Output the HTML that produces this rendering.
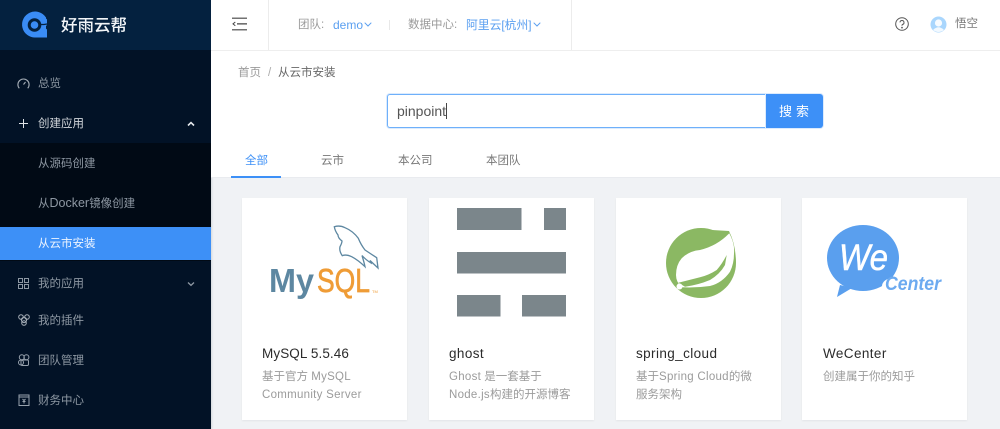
<!DOCTYPE html>
<html><head><meta charset="utf-8">
<style>
html,body{margin:0;padding:0;width:1000px;height:429px;overflow:hidden;background:#f0f2f5}
body{font-family:"Liberation Sans","Noto Sans CJK SC",sans-serif;position:relative}
#w{position:absolute;left:0;top:0;width:1000px;height:429px;overflow:hidden;filter:blur(.3px);background:#f0f2f5}
.a{position:absolute;white-space:nowrap;line-height:1}
.box{position:absolute}
.nav{color:#8e98a3;font-size:11.5px}
.card{position:absolute;top:198px;width:165px;height:222px;background:#fff;box-shadow:0 1px 2px rgba(0,0,0,.06)}
.t{position:absolute;left:20px;top:149px;font-size:13.5px;color:#2b2b2b;line-height:1;white-space:nowrap;letter-spacing:.4px}
.d{position:absolute;left:20px;top:170px;font-size:11.5px;color:#9b9b9b;line-height:18px;white-space:nowrap}
.d span{letter-spacing:.28px}
svg{position:absolute;overflow:visible}
</style></head><body><div id="w">
<!-- sidebar -->
<div class="box" style="left:0;top:0;width:211px;height:429px;background:#021226;box-shadow:1px 0 2px rgba(0,21,41,.12)"></div>
<div class="box" style="left:0;top:0;width:211px;height:50px;background:#04213f"></div>
<div class="box" style="left:0;top:143px;width:211px;height:118px;background:#010a15"></div>
<div class="box" style="left:0;top:227px;width:211px;height:33px;background:#3d90f7"></div>
<svg style="left:20px;top:10px" width="30" height="30" viewBox="0 0 30 30">
<path d="M26 7.5A13 13 0 1 0 16 27.5H27V19.5L22.5 15.500H27V11L22 11Q19.500 7 15 7.500A7.500 7.500 0 0 0 15 22.500Q19 22.500 21 19.500L26 25" fill="#3a8cf5"/>
<circle cx="14.500" cy="15" r="6.800" fill="#04213f"/><circle cx="14.500" cy="15" r="3.800" fill="#3a8cf5"/>
<path d="M21 12.500H27V9.500L25 7.500L19 8Z" fill="#3a8cf5"/><path d="M20 14.500H24L27 14" stroke="#04213f" stroke-width="1.200" fill="none"/>
</svg>
<div class="a" style="left:61px;top:18px;font-size:16.5px;color:#f2f5f8;font-weight:500">好雨云帮</div>

<svg style="left:17px;top:77px" width="13" height="13" viewBox="0 0 13 13" fill="none" stroke="#a6aeb7" stroke-width="1.100"><path d="M2.300 11.300A5.600 5.600 0 1 1 10.700 11.300"/><path d="M6.500 7.500L8.500 5"/></svg>
<div class="a nav" style="left:38px;top:79px">总览</div>
<svg style="left:18px;top:118px" width="11" height="11" viewBox="0 0 11 11" stroke="#dfe3e7" stroke-width="1"><path d="M5.500 1V10M1 5.500H10"/></svg>
<div class="a nav" style="left:38px;top:119px;color:#d3d7dc">创建应用</div>
<svg style="left:187px;top:121px" width="8" height="6" viewBox="0 0 8 6" fill="none" stroke="#e6e9ec" stroke-width="1.600"><path d="M1 4.500L4 1.600L7 4.500"/></svg>
<div class="a nav" style="left:38px;top:159px">从源码创建</div>
<div class="a nav" style="left:38px;top:197px">从<span style="font-size:12.5px">Docker</span>镜像创建</div>
<div class="a nav" style="left:38px;top:239px;color:#eef5ff">从云市安装</div>
<svg style="left:18px;top:278px" width="11" height="11" viewBox="0 0 11 11" fill="none" stroke="#8e98a3" stroke-width="1"><rect x=".5" y=".5" width="4" height="4"/><rect x="6.500" y=".5" width="4" height="4"/><rect x=".5" y="6.500" width="4" height="4"/><rect x="6.500" y="6.500" width="4" height="4"/></svg>
<div class="a nav" style="left:38px;top:279px">我的应用</div>
<svg style="left:187px;top:281px" width="8" height="6" viewBox="0 0 8 6" fill="none" stroke="#8e98a3" stroke-width="1.300"><path d="M1 1.500L4 4.400L7 1.500"/></svg>
<svg style="left:18px;top:314px" width="12" height="12" viewBox="0 0 12 12" fill="none" stroke="#a6aeb7" stroke-width="1"><circle cx="3" cy="3" r="2.300"/><circle cx="9" cy="3" r="2.300"/><circle cx="6" cy="6" r="2.600"/><circle cx="6" cy="9" r="2.300"/></svg>
<div class="a nav" style="left:38px;top:316px">我的插件</div>
<svg style="left:18px;top:354px" width="12" height="12" viewBox="0 0 12 12" fill="none" stroke="#98a2ad" stroke-width="1"><circle cx="3.800" cy="3.200" r="2.500"/><circle cx="8.400" cy="3.200" r="2.500"/><circle cx="3" cy="8.500" r="2.500"/><rect x="3" y="6" width="7.500" height="5.500" rx="1.200"/></svg>
<div class="a nav" style="left:38px;top:356px">团队管理</div>
<svg style="left:18px;top:394px" width="12" height="12" viewBox="0 0 12 12" fill="none" stroke="#98a2ad" stroke-width="1"><path d="M1 1H11V11.500H1ZM1 3H11"/><path d="M4.500 5L6 6.500L7.500 5M6 6.500V9.500M4.500 7.500H7.500"/></svg>
<div class="a nav" style="left:38px;top:396px">财务中心</div>

<!-- header -->
<div class="box" style="left:211px;top:0;width:789px;height:177px;background:#fff"></div>
<div class="box" style="left:211px;top:50px;width:789px;height:1px;background:#eeeeee"></div>
<div class="box" style="left:268px;top:0;width:1px;height:50px;background:#ececec"></div>
<div class="box" style="left:571px;top:0;width:1px;height:50px;background:#ececec"></div>
<svg style="left:232px;top:17px" width="15" height="14" viewBox="0 0 15 14" fill="none" stroke="#444" stroke-width="1.200"><path d="M0 1.200H15M5 6.900H15M0 12.800H15"/><path d="M3.300 5L1 6.900L3.300 8.800" stroke-width="1"/></svg>
<div class="a" style="left:298px;top:20px;font-size:11.5px;color:#9a9a9a">团队:</div>
<div class="a" style="left:333px;top:19px;font-size:12px;color:#5a9ff0">demo</div>
<svg style="left:364px;top:22px" width="8" height="5" viewBox="0 0 8 5" fill="none" stroke="#5a9ff0" stroke-width="1"><path d="M.7 .7L4 4L7.300 .7"/></svg>
<div class="box" style="left:389px;top:20px;width:1px;height:10px;background:#e8e8e8"></div>
<div class="a" style="left:408px;top:20px;font-size:11.5px;color:#9a9a9a">数据中心:</div>
<div class="a" style="left:466px;top:20px;font-size:11.8px;color:#5a9ff0">阿里云[杭州]</div>
<svg style="left:533px;top:22px" width="8" height="5" viewBox="0 0 8 5" fill="none" stroke="#5a9ff0" stroke-width="1"><path d="M.7 .7L4 4L7.300 .7"/></svg>
<svg style="left:895px;top:17px" width="14" height="14" viewBox="0 0 14 14" fill="none" stroke="#555" stroke-width="1"><circle cx="7" cy="7" r="6.300"/><path d="M5 5.400A2 2 0 1 1 7.300 7.500Q7 7.700 7 8.800"/><circle cx="7" cy="10.600" r=".4"/></svg>
<svg style="left:930px;top:16px" width="17" height="17" viewBox="0 0 17 17"><circle cx="8.500" cy="8.500" r="8" fill="#a9d6fd"/><circle cx="8.500" cy="7" r="3.600" fill="#fff" opacity=".9"/><path d="M3 14Q8.500 8.500 14 14Q8.500 18 3 14Z" fill="#fff" opacity=".85"/></svg>
<div class="a" style="left:955px;top:19px;font-size:11.5px;color:#777">悟空</div>

<!-- breadcrumb -->
<div class="a" style="left:238px;top:68px;font-size:11.5px;color:#9a9a9a">首页</div>
<div class="a" style="left:268px;top:68px;font-size:11.5px;color:#aaa">/</div>
<div class="a" style="left:278px;top:68px;font-size:11.5px;color:#666">从云市安装</div>

<!-- search -->
<div class="box" style="left:387px;top:94px;width:379px;height:34px;box-sizing:border-box;border:1px solid #6eb0fa;border-right:0;border-radius:3px 0 0 3px;background:#fff;box-shadow:0 0 0 1px #dcebfd"></div>
<div class="a" style="left:397px;top:104px;font-size:14px;color:#555">pinpoint</div>
<div class="box" style="left:446px;top:103px;width:1px;height:16px;background:#444"></div>
<div class="box" style="left:766px;top:94px;width:57px;height:34px;background:#3d90f7;border-radius:0 3px 3px 0;box-shadow:0 0 0 1px #dcebfd"></div>
<div class="a" style="left:779px;top:105px;font-size:13px;color:#fff;letter-spacing:4px">搜索</div>

<!-- tabs -->
<div class="a" style="left:245px;top:156px;font-size:11.5px;color:#3d90f7">全部</div>
<div class="a" style="left:321px;top:156px;font-size:11.5px;color:#777">云市</div>
<div class="a" style="left:398px;top:156px;font-size:11.5px;color:#777">本公司</div>
<div class="a" style="left:486px;top:156px;font-size:11.5px;color:#777">本团队</div>
<div class="box" style="left:211px;top:177px;width:789px;height:1px;background:#e9ebef"></div>
<div class="box" style="left:231px;top:176px;width:50px;height:2px;background:#3d90f7"></div>

<!-- cards -->
<div class="card" style="left:242px">
<svg style="left:0;top:0" width="165" height="120" viewBox="242 198 165 120">
<path d="M334.300 226.700Q340 225 345 227.700Q353 231 358.300 238.300Q361 245 365 250Q371 254 376.700 257.700L378 268L370 260.500L371 263Q366 260 362 255.500Q364 262 365 266.700Q358 260 351.700 256.700Q346 254 342.300 255.700Q339 251 340 246.700Q342 243 342 241Q338 238 338 235Q335 231 334.300 226.700Z" fill="none" stroke="#5d87a1" stroke-width="1.300"/>
<text x="269" y="292" font-family="Liberation Sans" font-weight="bold" font-size="33" fill="#5d87a1" textLength="45" lengthAdjust="spacingAndGlyphs">My</text>
<text x="317" y="292" font-family="Liberation Sans" font-size="33" stroke="#ef9c36" stroke-width=".7" fill="#ef9c36" textLength="53" lengthAdjust="spacingAndGlyphs">SQL</text>
<text x="372" y="293" font-family="Liberation Sans" font-size="4" fill="#ef9c36">TM</text>
</svg>
<div class="t" style="letter-spacing:.1px">MySQL 5.5.46</div>
<div class="d">基于官方 <span>MySQL</span><br><span>Community Server</span></div>
</div>
<div class="card" style="left:429px">
<svg style="left:0;top:0" width="165" height="120" viewBox="429 198 165 120" fill="#7b868b">
<rect x="457" y="208" width="64.500" height="22"/><rect x="544" y="208" width="22" height="22"/><rect x="457" y="252" width="109" height="21.500"/><rect x="457" y="295" width="43.500" height="21.500"/><rect x="522" y="295" width="44" height="21.500"/>
</svg>
<div class="t">ghost</div>
<div class="d"><span>Ghost</span> 是一套基于<br><span>Node.js</span>构建的开源博客</div>
</div>
<div class="card" style="left:616px">
<svg style="left:0;top:0" width="165" height="120" viewBox="616 198 165 120">
<circle cx="701" cy="263" r="35" fill="#8bb863"/>
<path d="M712 230L729 231Q736 245 735.900 263Z" fill="#8bb863"/>
<path d="M729.300 233.300Q735 244 734 253.300Q734 264 730 271.700Q722 283 710 286Q696 288 681.700 287.300Q676 282 676 275Q676 265 681.700 258.300Q689 251 700 250Q717 246 729.300 233.300Z" fill="#fff"/>
<path d="M726.700 255Q722 264 716.700 270Q709 275 700 277.300L678.300 282.700L685 286.700Q698 285 710 280Q720 274 725 265Z" fill="#8bb863"/>
<circle cx="679.500" cy="286.500" r="3" fill="#fff"/>
</svg>
<div class="t">spring_cloud</div>
<div class="d">基于<span>Spring Cloud</span>的微<br>服务架构</div>
</div>
<div class="card" style="left:802px">
<svg style="left:0;top:0" width="165" height="120" viewBox="802 198 165 120">
<ellipse cx="863" cy="258" rx="36" ry="33" fill="#5a9fee"/>
<path d="M840 285L837 297L852 288Z" fill="#5a9fee"/>
<ellipse cx="893" cy="286" rx="11" ry="8" fill="#fff"/>
<text x="839" y="270" font-family="Liberation Sans" font-style="italic" font-size="37" fill="#fff" stroke="#fff" stroke-width=".5" textLength="49" lengthAdjust="spacingAndGlyphs">We</text>
<text x="885" y="290" font-family="Liberation Sans" font-style="italic" font-weight="bold" font-size="19" fill="#6caaf0" textLength="56" lengthAdjust="spacingAndGlyphs">Center</text>
</svg>
<div class="t" style="left:21px">WeCenter</div>
<div class="d" style="left:21px">创建属于你的知乎</div>
</div>
</div></body></html>
